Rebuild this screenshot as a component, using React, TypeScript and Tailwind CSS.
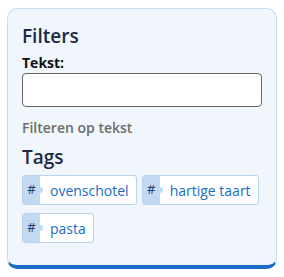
import React from 'react';

const tags = ['ovenschotel', 'hartige taart', 'pasta'];

const Tag = ({ label }: { label: string }) => (
  <a href="#" className="flex h-[30px] items-stretch rounded-[3px] border border-[#b9d3ee] bg-white text-[14px] text-[#1a6dc6]">
    <span className="relative flex w-[17px] items-center justify-center rounded-l-[2px] bg-[#c2daf1] text-[13px] text-[#1d3a66]">
      #
      <span className="absolute right-[-3px] top-1/2 h-[6px] w-[6px] -translate-y-1/2 rounded-full bg-[#c2daf1]" />
    </span>
    <span className="flex items-center pl-[10px] pr-[7px]">{label}</span>
  </a>
);

export default function App() {
  return (
    <div className="px-[7px] pt-2" style={{ fontFamily: '"Open Sans", "Noto Sans", sans-serif' }}>
      <aside className="rounded-[10px] border border-b-4 border-[#c6dcf1] border-b-[#1a6dc6] bg-[#f1f6fc] px-[14px] pt-[14px] pb-[22px]">
        <h2 className="text-[19px] font-semibold leading-[26px] text-[#1c2a45]">Filters</h2>
        <label className="mt-[4px] block text-[14px] font-bold leading-[20px] text-[#111]">Tekst:</label>
        <input
          type="text"
          className="block h-[34px] w-full rounded-[4px] border border-[#666] bg-white px-2"
        />
        <p className="mt-[11px] text-[14px] font-semibold leading-[20px] text-[#6b6b6b]">Filteren op tekst</p>
        <h2 className="mt-[6px] text-[19px] font-semibold leading-[26px] text-[#1c2a45]">Tags</h2>
        <div className="mt-[5px] flex flex-wrap gap-x-[5px] gap-y-[8px]">
          {tags.map((t) => (
            <Tag key={t} label={t} />
          ))}
        </div>
      </aside>
    </div>
  );
}
